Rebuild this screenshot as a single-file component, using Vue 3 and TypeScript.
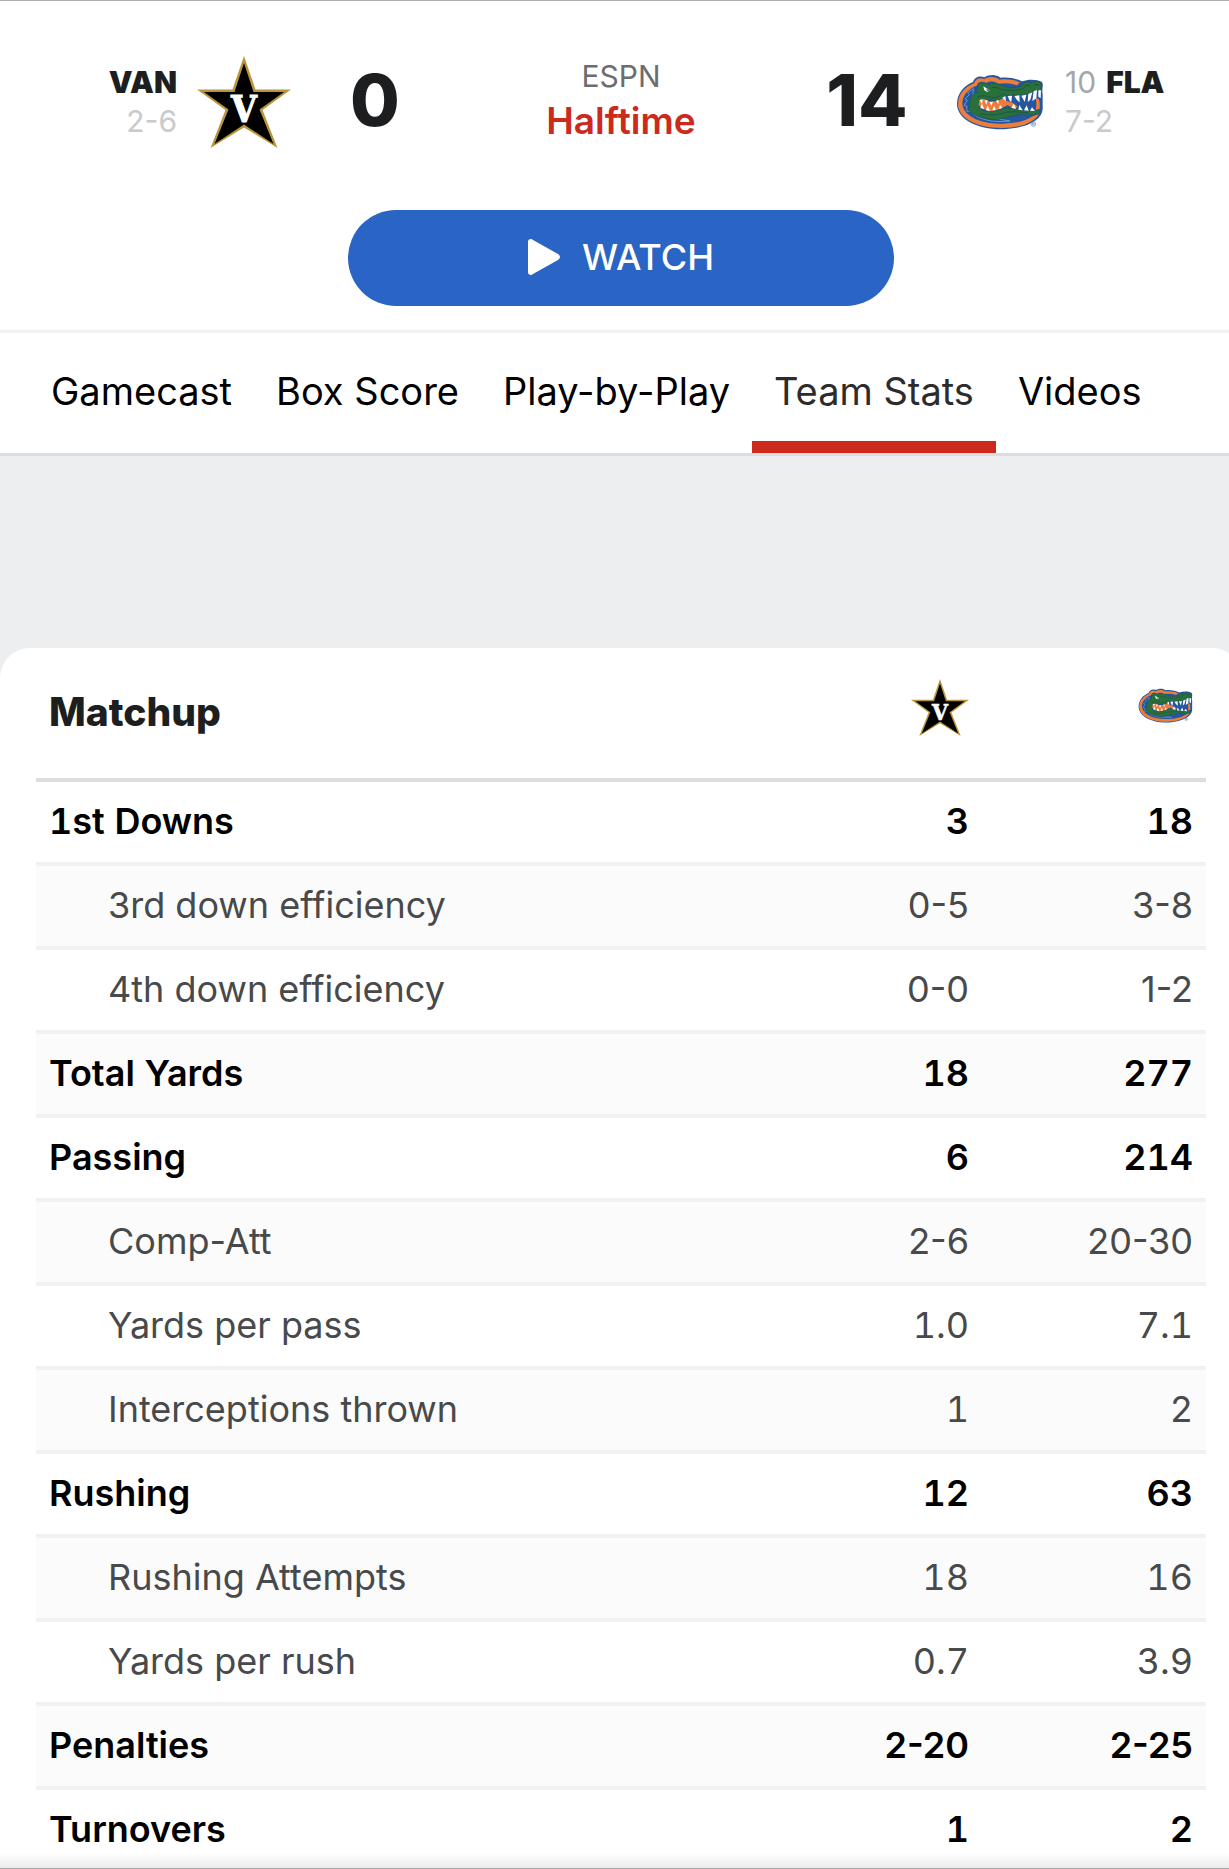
<script setup lang="ts">
import { h, ref } from 'vue'

interface StatRow {
  label: string
  away: string
  home: string
  sub?: boolean
}

const tabs: string[] = ['Gamecast', 'Box Score', 'Play-by-Play', 'Team Stats', 'Videos']
const activeTab = ref('Team Stats')

const rows: StatRow[] = [
  { label: '1st Downs', away: '3', home: '18' },
  { label: '3rd down efficiency', away: '0-5', home: '3-8', sub: true },
  { label: '4th down efficiency', away: '0-0', home: '1-2', sub: true },
  { label: 'Total Yards', away: '18', home: '277' },
  { label: 'Passing', away: '6', home: '214' },
  { label: 'Comp-Att', away: '2-6', home: '20-30', sub: true },
  { label: 'Yards per pass', away: '1.0', home: '7.1', sub: true },
  { label: 'Interceptions thrown', away: '1', home: '2', sub: true },
  { label: 'Rushing', away: '12', home: '63' },
  { label: 'Rushing Attempts', away: '18', home: '16', sub: true },
  { label: 'Yards per rush', away: '0.7', home: '3.9', sub: true },
  { label: 'Penalties', away: '2-20', home: '2-25' },
  { label: 'Turnovers', away: '1', home: '2' },
]

const isPair = (value: string): boolean => value.includes('-')

const GREEN = '#29703a'
const BLUE = '#2457a0'
const ORANGE = '#ed7d3b'

// Vanderbilt star: gold rim, black field, white V
const VanMark = () =>
  h('svg', { viewBox: '0 0 94 92', role: 'img', 'aria-label': 'Vanderbilt' }, [
    h('path', {
      d: 'M47 0 58.500 33.500H94L65.500 54 80.500 92 47 71.500 13.500 92 28.500 54 0 33.500H35.500Z',
      fill: '#b8953a',
    }),
    h('path', {
      d: 'M47 7 56.500 36H87L62.500 53.500 76.500 88 47 68.500 17.500 88 31.500 53.500 7 36H37.500Z',
      fill: '#000',
    }),
    h(
      'text',
      {
        x: 47,
        y: 66,
        'text-anchor': 'middle',
        'font-family': "'DejaVu Serif Condensed', 'DejaVu Serif', serif",
        'font-weight': 700,
        'font-size': 37,
        fill: '#fff',
        stroke: '#fff',
        'stroke-width': 1,
      },
      'V',
    ),
  ])

// Florida gator: layered fills from the outer ring to the teeth
const flaLayers: Record<string, string | number>[] = [
  {
    d: 'M52 164C51 132 72 107 100 96C104 82 120 76 134 82C148 73 171 72 182 83C205 80 229 85 247 94C266 87 290 87 307 96C313 105 305 119 309 132V178C307 206 270 233 202 237C120 242 55 211 52 164Z',
    fill: BLUE,
  },
  {
    d: 'M55 163C55 133 76 110 103 100C107 86 121 81 134 87C149 79 168 79 180 89C203 86 225 90 241 97L232 106C214 99 196 98 176 101C160 91 147 94 139 99C126 91 114 96 111 107C85 116 68 137 68 160C69 197 121 224 190 221C230 220 258 213 279 199L298 191C283 219 240 233 190 234C112 235 56 205 55 163Z',
    fill: ORANGE,
  },
  {
    d: 'M101 116 84 128 89 134 76 147 83 151 73 166 82 169 81 184 92 184C113 209 163 219 211 213L175 207 116 194 98 165Z',
    fill: BLUE,
    stroke: '#8fb0d8',
    'stroke-width': 2,
  },
  {
    d: 'M115 106C120 95 134 94 144 105L157 99C171 97 183 107 197 110C215 115 232 113 243 109C247 97 263 92 276 99C288 90 302 93 305 103L303 121C287 120 276 129 266 133C243 136 224 136 205 135C192 138 188 147 173 152L132 148 119 156 118 174 131 182 151 186 172 180 200 174 230 177 253 181 302 181 298 192 271 195 240 193 205 201 168 210C133 207 98 198 85 178C92 169 86 162 92 150C91 138 102 131 111 128Z',
    fill: GREEN,
    stroke: '#1f4f6a',
    'stroke-width': 2,
  },
  {
    d: 'M119 151 133 147 151 155 174 153 190 145 201 153 219 158 234 170 224 176 204 165 180 178 154 184 130 177 117 166Z',
    fill: ORANGE,
  },
  { d: 'M205 142 265 139 289 151 289 175 254 174 232 166 211 151Z', fill: BLUE },
  { d: 'M288 146C298 140 302 154 300 176L288 180C291 166 291 155 288 146Z', fill: ORANGE },
  {
    d: 'M120 150 129 148 127 162ZM135 151 144 151 140 164ZM150 156 160 155 155 168ZM169 152 177 150 176 163ZM188 143 197 138 199 154ZM204 138 217 137 215 156 210 152ZM224 138 239 136 240 157 232 150ZM245 137 260 134 255 156ZM266 132 278 127 272 149 264 156ZM282 124 292 120 290 145 278 153ZM296 121 304 121 303 145 296 140ZM122 174 127 160 133 177ZM139 181 144 166 151 183ZM158 181 163 167 169 180ZM177 177 181 164 188 174ZM215 174 222 161 230 176ZM236 179 239 165 249 181ZM253 181 261 166 267 182ZM271 182 277 172 286 183Z',
    fill: '#fff',
  },
  { d: 'M131 109 150 121 143 126 134 121Z', fill: '#fff' },
  { d: 'M139 117 149 120 144 124Z', fill: '#1d3e63' },
  {
    d: 'M157 112C175 110 185 122 203 121 224 123 246 119 256 111M112 143C124 133 145 139 157 143 174 146 185 133 195 131M121 191C154 198 174 194 204 186 224 184 244 187 267 188M257 108C263 104 268 105 272 109M284 107C289 102 295 103 299 107',
    fill: 'none',
    stroke: '#1d5546',
    'stroke-width': 3,
  },
  {
    d: 'M274 222A7 7 0 1 0 288 222A7 7 0 1 0 274 222M279 226V218H282Q285 220 282 222H279M282 222 284 226',
    fill: 'none',
    stroke: '#5f80ae',
    'stroke-width': 2,
  },
]

const FlaMark = () =>
  h(
    'svg',
    { viewBox: '50 72 262 168', role: 'img', 'aria-label': 'Florida' },
    flaLayers.map((layer) => h('path', layer)),
  )
</script>

<template>
  <main class="viewport">
    <div class="page">
      <header class="game">
        <div class="scoreboard">
          <div class="team away">
            <div class="abbr">VAN</div>
            <div class="record">2-6</div>
          </div>
          <VanMark class="logo van" />
          <div class="score">0</div>
          <div class="status">
            <div class="network">ESPN</div>
            <div class="clock">Halftime</div>
          </div>
          <div class="score">14</div>
          <FlaMark class="logo fla" />
          <div class="team home">
            <div class="abbr"><span class="rank">10</span>FLA</div>
            <div class="record">7-2</div>
          </div>
        </div>
        <button class="watch" type="button">
          <svg class="play" viewBox="0 0 32 36" aria-hidden="true">
            <path d="M0 3Q0 0 3 0Q4 0 5 1L30 15Q34 18 30 21L5 35Q4 36 3 36Q0 36 0 33Z" fill="#fff" />
          </svg>
          WATCH
        </button>
      </header>

      <nav class="tabs">
        <a
          v-for="tab in tabs"
          :key="tab"
          href="#"
          class="tab"
          :class="{ active: tab === activeTab }"
          @click.prevent="activeTab = tab"
        >{{ tab }}</a>
      </nav>

      <section class="card">
        <table class="stats">
          <thead>
            <tr>
              <th scope="col" class="title">Matchup</th>
              <th scope="col" class="value"><VanMark class="mini van" /></th>
              <th scope="col" class="value"><FlaMark class="mini fla" /></th>
            </tr>
          </thead>
          <tbody>
            <tr v-for="row in rows" :key="row.label" :class="{ sub: row.sub }">
              <th scope="row">{{ row.label }}</th>
              <td class="value" :class="{ pair: isPair(row.away) }">{{ row.away }}</td>
              <td class="value" :class="{ pair: isPair(row.home) }">{{ row.home }}</td>
            </tr>
          </tbody>
        </table>
      </section>
    </div>
    <div class="fade" aria-hidden="true"></div>
  </main>
</template>

<style>
body {
  margin: 0;
  background: #fff;
}
</style>

<style scoped>
* {
  box-sizing: border-box;
}

.viewport {
  position: relative;
  height: 100vh;
  overflow: hidden;
  border-top: 1px solid #adadad;
  font-family: Inter, 'Liberation Sans', sans-serif;
  color: #1c1e20;
}

/* The page runs slightly past the right edge of the window */
.page {
  margin-right: -13px;
  background: #edeef0;
}

.game {
  display: flex;
  flex-direction: column;
  align-items: center;
  padding: 47px 0 24px;
  background: #fff;
  border-bottom: 3px solid #f2f2f2;
}

.scoreboard {
  display: grid;
  grid-template-columns: 1fr 96px 166px 326px 166px 96px 1fr;
  align-items: center;
  width: 100%;
  height: 108px;
}

.team {
  padding: 0 19px;
  font-size: 30px;
  line-height: 39px;
}

.away {
  text-align: right;
}

.abbr {
  font-weight: 900;
}

.rank {
  margin-right: 10px;
  font-weight: 400;
  color: #a5a6a7;
}

.record {
  color: #c9cacb;
}

.logo {
  justify-self: center;
}

.logo.van {
  width: 94px;
  height: 92px;
}

.logo.fla {
  width: 88px;
  height: 56px;
  margin-left: 4px;
}

.score {
  padding-bottom: 4px;
  text-align: center;
  font-size: 72px;
  line-height: 84px;
  font-weight: 800;
}

.status {
  padding-bottom: 6px;
  text-align: center;
}

.network {
  font-size: 30px;
  line-height: 44px;
  color: #6c6d6f;
}

.clock {
  font-size: 37px;
  line-height: 46px;
  font-weight: 600;
  color: #cb2a1d;
}

.watch {
  display: flex;
  align-items: center;
  justify-content: center;
  gap: 22px;
  width: 44%;
  height: 96px;
  margin-top: 54px;
  padding-bottom: 3px;
  border: 0;
  border-radius: 48px;
  background: #2a64c5;
  color: #fff;
  font: 500 36px/42px Inter, 'Liberation Sans', sans-serif;
  cursor: pointer;
}

.play {
  width: 32px;
  height: 36px;
}

.tabs {
  display: flex;
  padding-left: 29px;
  background: #fff;
  border-bottom: 3px solid #dcddde;
}

.tab {
  height: 120px;
  padding: 0 22px;
  border-bottom: 12px solid transparent;
  font-size: 38px;
  line-height: 116px;
  color: #000;
  text-decoration: none;
  white-space: nowrap;
}

.tab.active {
  border-bottom-color: #cb2a1d;
  color: #2b2c2d;
}

.card {
  margin-top: 192px;
  padding: 0 36px 40px;
  border-radius: 30px 30px 0 0;
  background: #fff;
}

.stats {
  width: 100%;
  border-collapse: separate;
  border-spacing: 0;
  table-layout: fixed;
}

.stats th,
.stats td {
  height: 84px;
  padding: 0 13px 2px;
  border-bottom: 4px solid #f0f1f1;
  font-size: 36px;
  line-height: 42px;
  font-weight: 600;
  font-variant-numeric: tabular-nums;
  color: #000;
  text-align: left;
  vertical-align: middle;
  white-space: nowrap;
}

.stats .value {
  width: 224px;
  text-align: right;
}

.stats .pair {
  font-variant-numeric: normal;
}

.stats thead th {
  height: 134px;
  border-bottom-color: #dcddde;
}

.stats thead .value {
  padding-bottom: 12px;
}

.stats .title {
  font-size: 39px;
  font-weight: 800;
  color: #1c1e20;
}

.stats tbody tr:nth-child(even) {
  background: #fbfbfb;
}

.stats .sub th,
.stats .sub td {
  font-weight: 400;
  color: #48494a;
}

.stats .sub th {
  padding-left: 72px;
  font-variant-numeric: normal;
}

.mini {
  display: inline-block;
  vertical-align: middle;
}

.mini.van {
  width: 58px;
  height: 57px;
}

.mini.fla {
  width: 55px;
  height: 35px;
  margin-bottom: 6px;
}

.fade {
  position: absolute;
  right: 0;
  bottom: 0;
  left: 0;
  height: 16px;
  border-bottom: 1px solid #a6a6a6;
  background: linear-gradient(rgba(0, 0, 0, 0), rgba(0, 0, 0, 0.08));
}
</style>
